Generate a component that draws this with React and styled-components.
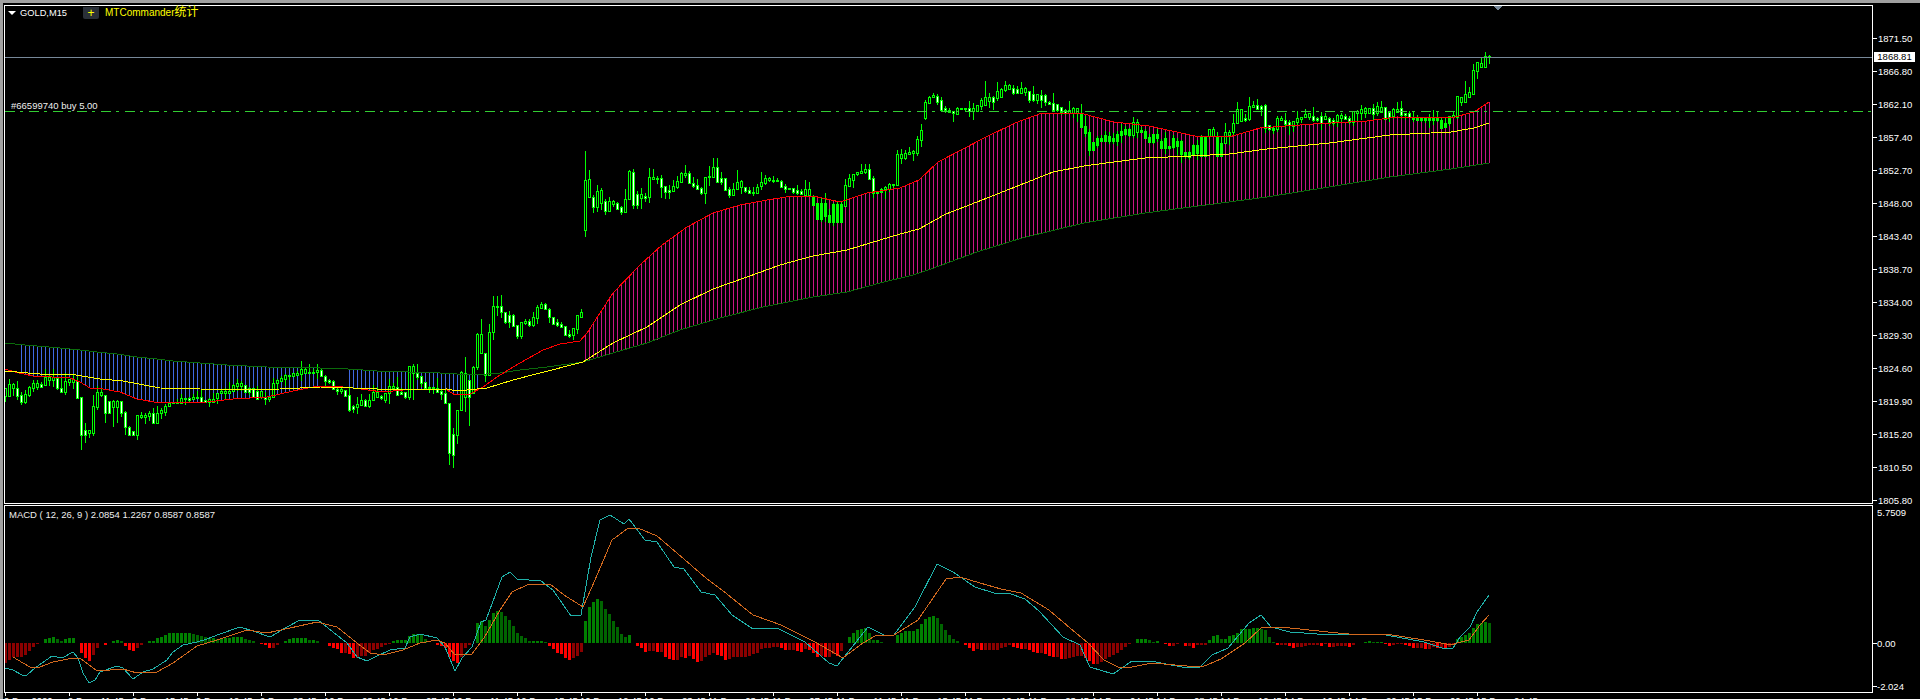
import React from 'react';
import styled, { createGlobalStyle } from 'styled-components';

const GlobalStyle = createGlobalStyle`
  html, body {
    margin: 0;
    height: 699px;
    overflow: hidden;
    background: #000;
  }
`;

const FONT = '"Liberation Sans", "Noto Sans CJK SC", sans-serif';

// candle bodies, read off the chart in 3x units: top-bottom, one every 4px
const BANDS = [
  { x0: 5, y0: 320, rows: '205-228 192-228 192-205 205-228 225-245 222-245 200-225 190-205 190-200 192-200 172-195 172-180 172-180 173-203 203-215 183-215 178-186 178-186 183-235 232-345 330-345 330-340 258-338 215-262 215-225 225-278 243-280 243-260 243-260 243-278 277-322 322-345 333-345 285-345 285-290 285-290 280-288 280-310 278-308 270-280 258-275 250-258 247-250 247-249 235-250 235-238 235-240 232-238 232-235 232-245 240-245 238-245 238-245 220-233 213-218 213-218 213-218 195-212 190-198 190-198 195-215 205-215 205-232 212-236 212-230 232-238 232-238 190-232 180-190 175-183 165-177 165-168 160-167 160-165 148-163 148-158 155-158 155-160 150-155 150-167 167-183 180-185 183-208 208-212 208-212 210-228 226-270 258-268 252-260 240-255 240-258 240-258 215-240 215-230 228-235 220-240 198-220 198-205 202-225 215-222 215-232 138-232 138-158 158-170 168-188 186-205 200-205 200-205 205-215 212-222 218-250' },
  { x0: 449, y0: 280, rows: '370-520 462-525 390-465 275-390 278-350 300-350 262-340 163-262 163-218 218-285 155-285 78-155 78-80 78-95 95-125 105-125 105-138 135-168 127-168 123-128 123-135 110-135 82-113 72-84 72-88 88-110 110-132 127-135 132-140 138-165 163-168 145-165 105-147 95-110' },
  { x0: 585, y0: 130, rows: '150-300 148-200 202-230 183-230 181-218 213-243 213-243 213-222 220-237 232-245 207-245 124-207 126-224 193-225 193-203 197-203 142-200 142-148 143-148 145-170 167-185 180-185 168-182 153-170 129-155 130-134 130-160 160-168 165-177 175-188 141-188 138-142 112-140 112-155 145-155 145-180 178-194 178-194 155-178 153-170 170-182 180-190 185-190 170-188 157-168 145-158 145-150 150-152 150-154 153-172 168-177 175-177 175-185 180-190 183-193 178-195 178-195 197-225 220-268 220-268 220-258 255-275 222-275 222-275 222-275 165-228 145-168 132-150 127-133 122-128 118-125 118-147 145-190 185-190 177-187 172-177 162-177 162-165 72-165 72-84 70-84 65-72 63-68 28-68 0-30' },
  { x0: 925, y0: 70, rows: '97-143 80-100 75-82 78-95 90-120 113-120 120-127 122-130 115-132 115-118 115-118 115-122 115-122 105-122 90-108 82-105 82-92 82-95 62-83 58-82 45-60 45-58 55-68 58-68 55-68 55-65 62-90 72-90 72-90 75-90 75-97 95-103 100-120 103-120 112-125 120-130 120-128 115-128 115-128 130-170 168-190 187-240 217-240 205-225 205-212 195-212 197-212 205-212 192-212 183-195 178-193 178-195 155-195 155-185 180-185 183-205 200-215 192-215 192-205 212-235 205-235 228-235 205-230 212-228 212-252 245-255 245-262 225-255 225-250 200-258 200-258 178-198 178-198 200-258 220-258 185-220 185-195 160-187 118-160 118-152 145-150 107-148 105-112 105-118 107-118 105-175 165-178 175-180 145-178 143-150 150-162 155-165 152-168 145-157 140-148 132-140 130-140 138-150 143-150 137-160 137-147 145-157 150-158 135-152 135-145 138-148 145-155 123-155 122-130 117-130 115-130 115-130 115-132 107-130 112-125 112-148 125-140 118-138 118-125 115-135 130-135 130-140 140-148 140-150 145-150 145-150 145-150 143-150 143-150' },
  { x0: 1441, y0: 0, rows: '360-383 370-380 348-368 345-352 288-350 290-305 283-305 275-290 210-283 186-212 190-200 167-200 167-172' },
];

// wicks that stand out in the reference: x -> [high, low]
const WICKS = {
  81: [397, 450], 85: [423, 443], 89: [430, 438], 105: [395, 423], 113: [400, 427], 117: [400, 423], 137: [415, 440],
  413: [364, 400], 417: [364, 380], 449: [403, 465], 453: [428, 468], 457: [410, 444], 461: [371, 410], 465: [357, 412],
  469: [380, 426], 481: [319, 353], 485: [353, 382], 489: [324, 375], 493: [296, 340], 497: [296, 316], 501: [295, 318],
  517: [325, 339], 521: [322, 339], 533: [312, 327], 541: [302, 308], 585: [151, 237], 589: [170, 197], 593: [195, 213],
  597: [185, 212], 601: [188, 210], 629: [170, 199], 633: [169, 209], 641: [188, 209], 653: [169, 179], 661: [175, 198],
  665: [186, 199], 685: [165, 178], 705: [177, 204], 713: [158, 178], 717: [158, 182], 737: [170, 189], 825: [193, 222],
  897: [150, 175], 985: [81, 105], 1081: [104, 127], 1237: [102, 123], 1257: [99, 110], 1465: [81, 102], 1473: [64, 94],
  1477: [62, 79], 1485: [52, 67], 1489: [55, 64],
};

const GREEN_LINE = [[5, 343], [15, 344], [25, 345], [37, 346], [60, 348], [80, 350], [97, 352], [117, 354], [137, 357], [157, 359], [173, 361], [200, 363], [227, 365], [267, 367], [320, 368], [348, 369], [377, 371], [440, 373], [473, 375], [500, 373], [520, 370], [547, 367], [583, 362], [613, 353], [647, 343], [680, 330], [720, 318], [763, 307], [813, 297], [847, 292], [880, 283], [913, 275], [931, 269], [977, 252], [1022, 238], [1084, 223], [1145, 213], [1206, 205], [1267, 197], [1329, 187], [1390, 177], [1451, 169], [1489, 163]];
const RED_LINE = [[5, 369], [15, 372], [33, 376], [70, 378], [80, 382], [90, 388], [103, 389], [120, 392], [137, 399], [160, 403], [207, 402], [233, 399], [267, 397], [293, 391], [313, 387], [333, 386], [353, 388], [383, 392], [413, 389], [447, 390], [455, 395], [470, 394], [483, 387], [497, 377], [513, 367], [543, 350], [560, 344], [580, 341], [587, 333], [613, 293], [640, 265], [662, 245], [687, 227], [713, 213], [740, 205], [767, 200], [793, 196], [813, 196], [840, 202], [867, 193], [900, 188], [919, 180], [938, 162], [961, 150], [984, 138], [1015, 123], [1042, 113], [1080, 113], [1114, 122], [1149, 126], [1195, 136], [1229, 137], [1260, 128], [1313, 124], [1367, 121], [1397, 117], [1451, 118], [1474, 112], [1489, 102]];
const YELLOW_LINE = [[5, 371], [40, 374], [70, 374], [100, 379], [123, 381], [160, 388], [200, 389], [240, 390], [280, 389], [320, 387], [353, 388], [400, 390], [447, 389], [457, 391], [487, 388], [513, 380], [540, 373], [583, 362], [613, 343], [647, 327], [680, 305], [713, 289], [747, 277], [780, 265], [813, 256], [847, 250], [880, 240], [900, 234], [919, 229], [946, 214], [977, 202], [1015, 187], [1053, 172], [1084, 166], [1114, 162], [1145, 158], [1191, 156], [1229, 154], [1267, 149], [1329, 143], [1390, 135], [1451, 132], [1474, 128], [1489, 123]];

const MACD_LINE = [[5, 668], [13, 670], [22, 675], [27, 675], [35, 668], [42, 663], [52, 656], [62, 658], [73, 652], [78, 658], [83, 673], [89, 683], [95, 680], [100, 672], [117, 666], [123, 668], [133, 679], [143, 672], [153, 669], [167, 660], [173, 652], [183, 645], [197, 642], [207, 639], [220, 634], [240, 627], [253, 631], [270, 637], [287, 627], [300, 620], [318, 620], [333, 632], [347, 643], [357, 657], [367, 661], [377, 656], [390, 650], [405, 648], [410, 637], [420, 634], [437, 638], [445, 647], [455, 671], [462, 658], [472, 647], [481, 622], [486, 620], [502, 577], [510, 572], [517, 579], [541, 581], [553, 590], [571, 616], [581, 615], [591, 557], [600, 520], [610, 515], [624, 524], [629, 519], [645, 540], [657, 542], [674, 567], [684, 569], [701, 592], [715, 595], [732, 615], [753, 629], [777, 628], [805, 642], [829, 663], [837, 666], [868, 627], [884, 635], [894, 635], [915, 607], [937, 564], [953, 572], [975, 587], [994, 593], [1008, 593], [1025, 599], [1039, 611], [1063, 637], [1080, 645], [1090, 667], [1113, 674], [1132, 661], [1156, 662], [1187, 668], [1200, 667], [1212, 655], [1228, 648], [1249, 623], [1261, 615], [1271, 627], [1290, 632], [1331, 635], [1359, 634], [1386, 635], [1424, 642], [1445, 649], [1453, 648], [1460, 637], [1470, 627], [1477, 612], [1489, 595]];
const SIGNAL_LINE = [[13, 657], [23, 663], [30, 667], [40, 667], [53, 662], [73, 658], [80, 658], [97, 671], [123, 669], [137, 673], [157, 672], [173, 663], [197, 646], [217, 640], [247, 630], [267, 633], [290, 628], [317, 622], [337, 627], [357, 643], [370, 653], [383, 655], [403, 650], [420, 643], [437, 640], [445, 643], [455, 655], [472, 654], [484, 638], [500, 610], [512, 592], [527, 585], [550, 584], [564, 595], [583, 607], [595, 580], [612, 540], [627, 529], [638, 528], [657, 536], [677, 553], [707, 579], [722, 590], [753, 615], [781, 625], [815, 642], [843, 658], [863, 643], [875, 636], [894, 635], [918, 620], [946, 579], [960, 577], [980, 583], [1001, 589], [1021, 593], [1049, 610], [1070, 628], [1088, 643], [1104, 660], [1118, 667], [1132, 667], [1152, 663], [1187, 666], [1202, 667], [1221, 659], [1245, 643], [1261, 628], [1269, 627], [1290, 628], [1328, 632], [1359, 635], [1386, 634], [1424, 640], [1452, 645], [1457, 643], [1469, 640], [1480, 625], [1489, 615]];

// histogram height in px above the zero line, one bar every 4px
const HIST_A = [-20, -17, -14, -14, -14, -12, -8, -4, -1, 0, 4, 5, 6, 4, 2, 4, 5, 5, 0, -10, -15, -18, -12, -5, 0, -2, 0, 2, 3, 2, -3, -7, -8, -5, -2, 0, 2, 2, 5, 6, 8, 10, 10, 10, 10, 10, 10, 9, 8, 7, 6, 5, 5, 4, 5, 5, 5, 6, 6, 6, 4, 3, 2, 0, -1, -2, -5, -5, -2, 0, 2, 4, 5, 5, 5, 5, 3, 3, 2, 0, 0, -3, -5, -6, -10, -10, -11, -15, -15, -13, -13, -10, -7, -6, -4, -2, -1, 2, 3, 3, 3, 7, 9, 9, 8, 4, 0, 0, -2, -3, -5, -14, -18, -20, -14, -5, -2, 0, 20];
const HIST_B = [22, 17, 23, 30, 32, 31, 27, 23, 17, 10, 7, 5, 2, 2, 2, 2, 1, -3, -6, -10, -11, -15, -17, -15, -13, -9, 22, 36, 41, 44, 42, 34, 29, 22, 16, 9, 6, 8, 0, -3, -5, -9, -8, -8, -9, -9, -14, -16, -17, -17, -14, -15, -13, -16, -19, -18, -14, -12, -10, -12, -13, -17, -16, -14, -14, -14, -14, -13, -11, -10, -6, -5, -5, -4, -4, -5, -7, -7, -7, -8, -9, -6, -7, -10, -14, -13, -14, -14, -11, -13, -8, 0, 6, 10, 13, 14, 15, 10, 3, 3, 1, 0, 0, 0, 8, 10, 12, 12, 12, 14, 19, 24, 26, 27, 25, 19, 13, 8, 4, 2, 0, -2, -5, -8, -6, -7, -7];
const HIST_C = [-7, -7, -5, -4, -2, -4, -5, -6, -6, -7, -9, -10, -10, -11, -13, -14, -14, -16, -16, -15, -14, -13, -13, -15, -18, -21, -21, -19, -16, -14, -12, -10, -7, -4, -1, 0, 4, 4, 4, 3, 1, 2, 0, -1, -3, -3, -1, 0, -3, -3, -5, -2, -2, -2, 3, 7, 8, 4, 4, 7, 8, 10, 14, 14, 14, 15, 15, 14, 13, 6, 1, -2, -2, -2, -3, -5, -4, -4, -3, -2, -2, -2, -3, -1, -4, -4, -3, -3, -3, -4, -2, 0, 0, 1, 2, 1, 1, 1, -1, -3, -2, -1, -1, -2, -3, -5, -5, -5, -6, -6, -4, -5, -5, -6, -4, -1, 4, 6, 8, 10, 15, 19, 20, 21, 20];

const PRICES = ['1871.50', '1866.80', '1862.10', '1857.40', '1852.70', '1848.00', '1843.40', '1838.70', '1834.00', '1829.30', '1824.60', '1819.90', '1815.20', '1810.50', '1805.80'];
const TIMES = ['9 Dec 2020', '9 Dec   11:45', '9 Dec   15:45', '9 Dec   19:45', '9 Dec   23:45', '10 Dec   03:45', '10 Dec   07:45', '10 Dec   11:45', '10 Dec   15:45', '10 Dec   19:45', '10 Dec   23:45', '11 Dec   03:45', '11 Dec   07:45', '11 Dec   11:45', '11 Dec   15:45', '11 Dec   19:45', '11 Dec   23:45', '14 Dec   04:45', '14 Dec   08:45', '14 Dec   12:45', '14 Dec   16:45', '14 Dec   20:45', '15 Dec   00:45', '15 Dec   04:45'];

const at = (pts, x) => {
  if (x <= pts[0][0]) return pts[0][1];
  for (let i = 1; i < pts.length; i++) {
    if (x <= pts[i][0]) {
      const [x0, y0] = pts[i - 1];
      const [x1, y1] = pts[i];
      return y0 + ((y1 - y0) * (x - x0)) / (x1 - x0);
    }
  }
  return pts[pts.length - 1][1];
};

const toPoints = (pts) => pts.map(([x, y]) => `${x},${y}`).join(' ');

let seed = 4711;
const rnd = () => {
  seed = (seed * 16807) % 2147483647;
  return seed / 2147483647;
};

const candles = [];
BANDS.forEach(({ x0, y0, rows }) => {
  rows.split(' ').forEach((row, i) => {
    const [t, b] = row.split('-').map(Number);
    const x = x0 + i * 4;
    const top = Math.round(y0 + t / 3);
    const bottom = Math.max(top + 1, Math.round(y0 + b / 3));
    const wick = WICKS[x] || [top - Math.round(rnd() * rnd() * 12), bottom + Math.round(rnd() * rnd() * 12)];
    candles.push({ x, top, bottom, high: wick[0], low: wick[1] });
  });
});

const histMap = {};
HIST_A.forEach((h, i) => { histMap[5 + i * 4] = h; });
HIST_B.forEach((h, i) => { histMap[481 + i * 4] = h; });
HIST_C.forEach((h, i) => { histMap[1489 - (HIST_C.length - 1 - i) * 4] = h; });

const bars = [];
for (let x = 5; x <= 1489; x += 4) {
  const h = histMap[x] ?? histMap[x - 4] ?? 0;
  const prev = histMap[x - 4] ?? h;
  bars.push({ x, h, rising: h >= prev });
}

const ribbonXs = [];
for (let x = 21; x <= 1489; x += 4) {
  if ((x > 317 && x < 349) || (x > 477 && x < 585)) continue;
  ribbonXs.push(x);
}

const Window = styled.div`
  box-sizing: border-box;
  width: 1920px;
  height: 699px;
  overflow: hidden;
  background: #000;
  border-top: 3px solid #a0a0a0;
  border-left: 3px solid #a0a0a0;
  padding: 2px 0 0 1px;
  display: flex;
  flex-direction: column;
  font-family: ${FONT};
  font-size: 9.5px;
  color: #fff;
`;

const Row = styled.div`
  display: flex;
  height: ${(p) => p.$height}px;
  margin-top: ${(p) => p.$gap || 0}px;
`;

const Pane = styled.div`
  box-sizing: border-box;
  position: relative;
  flex: none;
  width: 1869px;
  height: 100%;
  border: 1px solid #fff;
`;

const ChartSvg = styled.svg`
  display: block;
  shape-rendering: crispEdges;
`;

const Axis = styled.div`
  position: relative;
  flex: 1;
  padding-top: ${(p) => p.$top}px;
  box-sizing: border-box;
`;

const AxisRow = styled.div`
  display: flex;
  align-items: center;
  height: ${(p) => p.$height}px;
  margin-top: ${(p) => p.$gap || 0}px;
`;

const Tick = styled.span`
  flex: none;
  width: 4px;
  height: 1px;
  margin-right: ${(p) => p.$space}px;
  background: ${(p) => (p.$hidden ? 'transparent' : '#fff')};
`;

const PriceTag = styled.div`
  position: absolute;
  top: 47px;
  left: 1px;
  width: 41px;
  height: 10px;
  background: #fff;
  color: #000;
  line-height: 10px;
  text-align: center;
`;

const SymbolLabel = styled.div`
  position: absolute;
  top: 1px;
  left: 3px;
  display: flex;
  align-items: center;
  gap: 4px;
  font-size: 9.3px;
  line-height: 12px;
  &::before {
    content: '';
    border-left: 4px solid transparent;
    border-right: 4px solid transparent;
    border-top: 4px solid #fff;
  }
`;

const Panel = styled.div`
  position: absolute;
  top: 0;
  left: 78px;
  display: flex;
  align-items: center;
  gap: 6px;
  color: #ff0;
  font-size: 10px;
  line-height: 12px;
`;

const PlusButton = styled.span`
  display: flex;
  align-items: center;
  justify-content: center;
  width: 16px;
  height: 12px;
  background: #2a3038;
  border-radius: 0 0 2px 2px;
  font-size: 12px;
`;

const Cjk = styled.span`
  font-size: 12px;
`;

const OrderLabel = styled.div`
  position: absolute;
  top: 94px;
  left: 6px;
  line-height: 12px;
  color: #eee;
`;

const MacdLabel = styled.div`
  position: absolute;
  top: 3px;
  left: 4px;
  line-height: 12px;
  color: #eee;
  white-space: pre;
`;

const TimeAxis = styled.div`
  display: flex;
  padding-left: 1px;
`;

const TimeCell = styled.div`
  flex: none;
  width: 64px;
  &::before {
    content: '';
    display: block;
    width: 1px;
    height: 3px;
    background: #fff;
  }
  span {
    display: block;
    line-height: 12px;
    white-space: pre;
    margin: -1px 0 0 -1px;
  }
`;

const Candle = ({ x, top, bottom, high, low, solid, center }) => (
  <g>
    <rect x={x} y={high} width="1" height={low - high} fill="#00ff00" />
    <rect x={x - 1} y={top} width="3" height={bottom - top + 1} fill="#00ff00" />
    {!solid && bottom - top > 1 && <rect x={x} y={top + 1} width="1" height={bottom - top - 1} fill={center} />}
  </g>
);

function PriceChart() {
  return (
    <ChartSvg width="1867" height="497" viewBox="5 6 1867 497">
      {ribbonXs.map((x) => {
        const red = at(RED_LINE, x);
        const green = at(GREEN_LINE, x);
        return (
          <rect
            key={x}
            x={x}
            y={Math.round(Math.min(red, green))}
            width="1"
            height={Math.round(Math.abs(red - green))}
            fill={x < 500 ? '#4169e1' : '#c71585'}
          />
        );
      })}
      {candles.map((c, i) => {
        const prev = candles[i - 1];
        const falling = prev && c.top + c.bottom > prev.top + prev.bottom;
        const solid = c.x >= 585 && c.top + 2 > at(RED_LINE, c.x);
        return <Candle key={c.x} {...c} solid={solid} center={falling ? '#fff' : '#000'} />;
      })}
      <polyline points={toPoints(GREEN_LINE)} fill="none" stroke="#0b6b0b" strokeWidth="1" />
      <polyline points={toPoints(RED_LINE)} fill="none" stroke="#ff0000" strokeWidth="1" />
      <polyline points={toPoints(YELLOW_LINE)} fill="none" stroke="#ffff00" strokeWidth="1" />
      <line x1="5" x2="1872" y1="57.5" y2="57.5" stroke="#778899" />
      <line x1="5" x2="1872" y1="111.5" y2="111.5" stroke="#32cd32" strokeDasharray="10 5 3 6" />
      <polygon points="1493.5,6 1502.5,6 1498,11" fill="#778899" />
    </ChartSvg>
  );
}

function MacdChart() {
  return (
    <ChartSvg width="1867" height="186" viewBox="5 506 1867 186">
      {bars.map(({ x, h, rising }) => (
        <rect
          key={x}
          x={x - 1}
          y={h >= 0 ? 643 - h : 643}
          width="3"
          height={Math.abs(h)}
          fill={h >= 0 ? (rising ? '#008000' : '#006400') : rising ? '#8b0000' : '#ff0000'}
        />
      ))}
      <polyline points={toPoints(MACD_LINE)} fill="none" stroke="#20b2aa" strokeWidth="1" />
      <polyline points={toPoints(SIGNAL_LINE)} fill="none" stroke="#d2691e" strokeWidth="1" />
    </ChartSvg>
  );
}

function App() {
  return (
    <>
      <GlobalStyle />
      <Window>
        <Row $height={499}>
          <Pane>
            <PriceChart />
            <SymbolLabel>GOLD,M15</SymbolLabel>
            <Panel>
              <PlusButton>+</PlusButton>
              <span>MTCommander<Cjk>统计</Cjk></span>
            </Panel>
            <OrderLabel>#66599740 buy 5.00</OrderLabel>
          </Pane>
          <Axis $top={17}>
            {PRICES.map((price) => (
              <AxisRow key={price} $height={33}>
                <Tick $space={1} />
                {price}
              </AxisRow>
            ))}
            <PriceTag>1868.81</PriceTag>
          </Axis>
        </Row>
        <Row $height={188} $gap={1}>
          <Pane>
            <MacdChart />
            <MacdLabel>MACD ( 12, 26, 9 ) 2.0854 1.2267 0.8587 0.8587</MacdLabel>
          </Pane>
          <Axis $top={1}>
            <AxisRow $height={12}>
              <Tick $hidden $space={0} />
              5.7509
            </AxisRow>
            <AxisRow $height={12} $gap={119}>
              <Tick $space={0} />
              0.00
            </AxisRow>
            <AxisRow $height={12} $gap={31}>
              <Tick $space={0} />
              -2.024
            </AxisRow>
          </Axis>
        </Row>
        <TimeAxis>
          {TIMES.map((time) => (
            <TimeCell key={time}>
              <span>{time}</span>
            </TimeCell>
          ))}
        </TimeAxis>
      </Window>
    </>
  );
}

export default App;
